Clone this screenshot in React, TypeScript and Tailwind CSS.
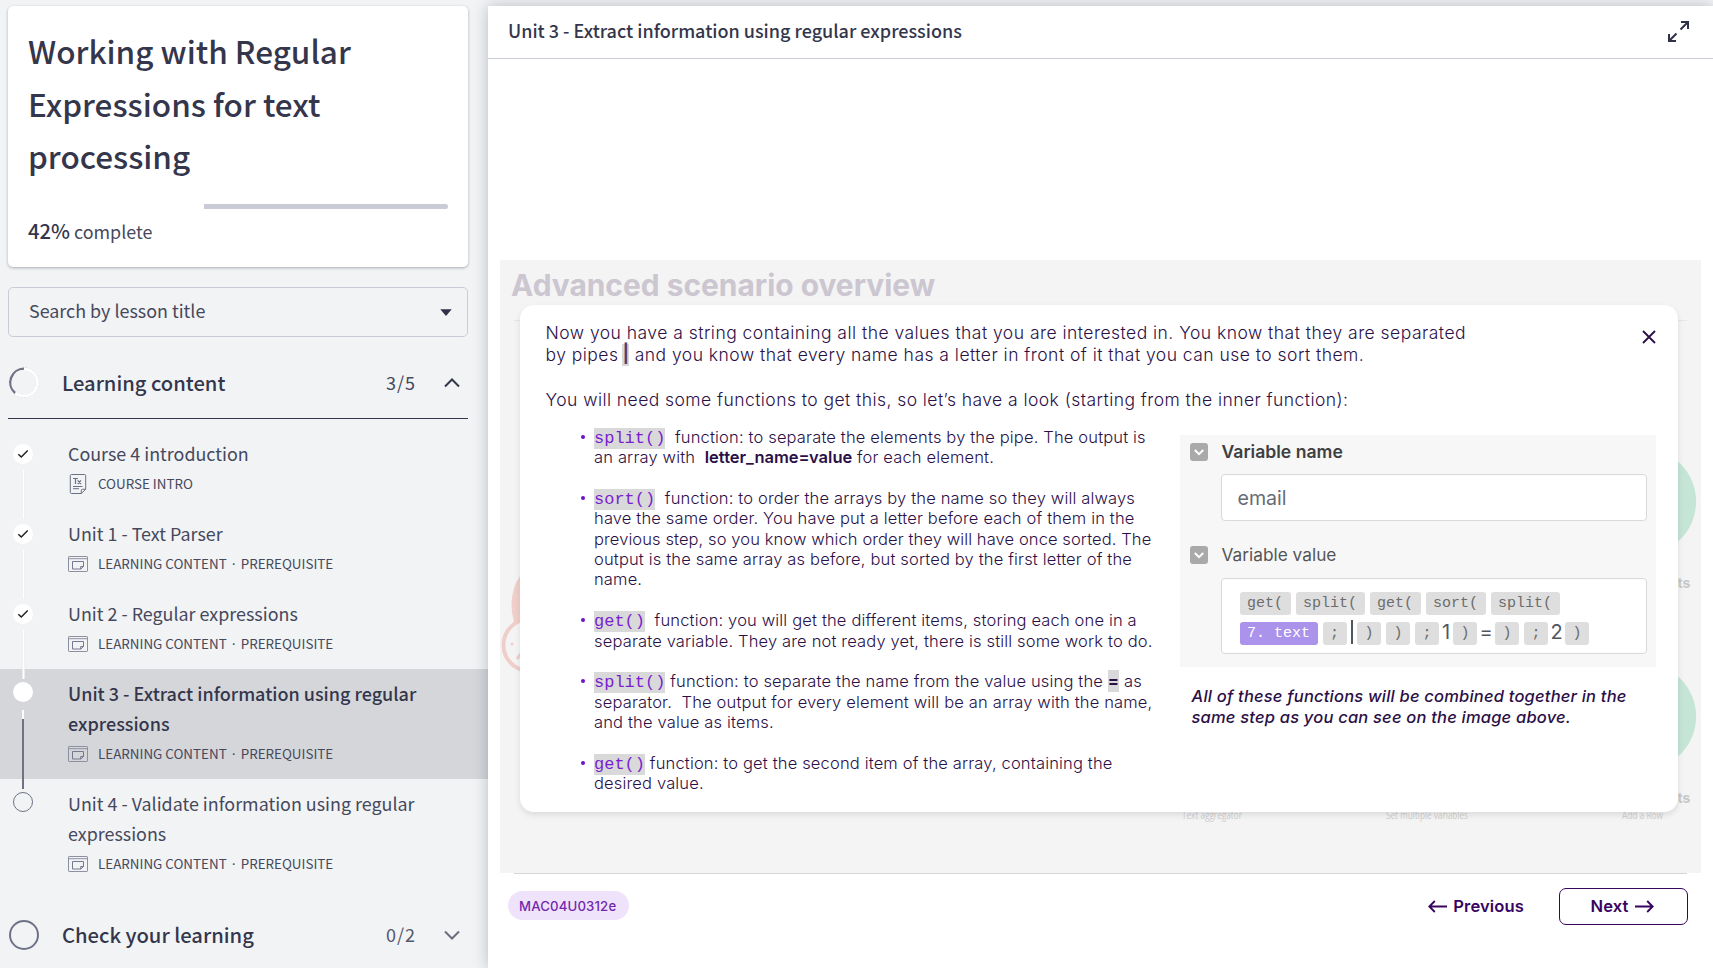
import type { ReactNode } from "react";

const sans = "font-['Noto_Sans_CJK_SC',sans-serif]";
const inter = "font-['Inter',sans-serif]";
const mono = "font-['Liberation_Mono',monospace]";

type Status = "done" | "current" | "todo";

type Lesson = {
  title: string;
  tags: string[];
  icon: "text" | "slides";
  status: Status;
};

const lessons: Lesson[] = [
  { title: "Course 4 introduction", tags: ["COURSE INTRO"], icon: "text", status: "done" },
  { title: "Unit 1 - Text Parser", tags: ["LEARNING CONTENT", "PREREQUISITE"], icon: "slides", status: "done" },
  { title: "Unit 2 - Regular expressions", tags: ["LEARNING CONTENT", "PREREQUISITE"], icon: "slides", status: "done" },
  {
    title: "Unit 3 - Extract information using regular expressions",
    tags: ["LEARNING CONTENT", "PREREQUISITE"],
    icon: "slides",
    status: "current",
  },
  {
    title: "Unit 4 - Validate information using regular expressions",
    tags: ["LEARNING CONTENT", "PREREQUISITE"],
    icon: "slides",
    status: "todo",
  },
];

function TextIcon() {
  return (
    <svg width="20" height="20" viewBox="0 0 20 20" fill="none" stroke="#6d7085" strokeWidth="1">
      <path d="M3.5 .5h13a1.2 1.2 0 0 1 1.2 1.2v13.6l-4.4 4.2H3.5a1.2 1.2 0 0 1-1.2-1.2V1.700a1.2 1.2 0 0 1 1.2-1.2Z" />
      <path d="M13.300 19.500v-3.200a1 1 0 0 1 1-1h3.400" />
      <path d="M5 12.500h9.500M5 14.700h6" />
      <path d="M5 4.500h5M7.500 4.500v5.500M9.700 6.300l3.300 3.700M13 6.300l-3.300 3.700" strokeWidth="1.200" />
    </svg>
  );
}

function SlidesIcon() {
  return (
    <svg width="20" height="16" viewBox="0 0 20 16" fill="none" stroke="#8e90a2" strokeWidth="1">
      <rect x=".5" y=".5" width="19" height="15" rx=".6" />
      <path d="M.5 2.700h19" />
      <path d="M4.500 5.500h11v5l-2.700 2.500H4.500Z" stroke="#76788d" />
      <path d="M12.700 13v-2.500h2.800" stroke="#76788d" />
    </svg>
  );
}

function Marker({ status }: { status: Status }) {
  if (status === "todo") {
    return <div className="h-5 w-5 shrink-0 rounded-full border border-[#6f7286]" />;
  }
  return (
    <div className="flex h-5 w-5 shrink-0 items-center justify-center rounded-full bg-white">
      {status === "done" && (
        <svg width="12" height="10" viewBox="0 0 12 10" fill="none" stroke="#222" strokeWidth="1.500">
          <path d="M1.300 5.200 4.300 8 10.700 1.500" />
        </svg>
      )}
    </div>
  );
}

function LessonRow({ lesson }: { lesson: Lesson }) {
  const { title, tags, icon, status } = lesson;
  return (
    <li className={`flex ${status === "current" ? "h-[110px] bg-[#d5d6da]" : status === "todo" ? "h-[110px]" : "h-20"}`}>
      <div className={`relative z-10 ml-[13px] flex w-5 shrink-0 flex-col items-center ${status === "done" ? "pt-[15px]" : "pt-[13px]"}`}>
        <Marker status={status} />
        {status === "done" && <div className="mt-[6px] -mb-4 h-[49px] w-[2px] shrink-0 translate-x-[0.5px] bg-white shadow-[0_0_1px_#d5d6da]" />}
        {status === "current" && (
          <>
            <div className="mt-[8px] h-[9px] w-[2px] shrink-0 bg-white" />
            <div className="h-[70px] w-[2px] shrink-0 bg-[#6f7286]" />
          </>
        )}
      </div>
      <div className="ml-[35px] w-[370px] pt-[9px]">
        <div
          className={`leading-[30px] ${
            status === "current" ? "text-[18px] font-medium text-[#34364c]" : "text-[17.900px] text-[#46485c]"
          }`}
        >
          {title}
        </div>
        <div className="mt-[2px] flex h-7 items-center text-[13.400px] leading-7 text-[#46485c]">
          <span className="flex w-[30px] shrink-0">{icon === "text" ? <TextIcon /> : <SlidesIcon />}</span>
          {tags.map((tag, i) => (
            <span key={tag} className="-mt-[2px] flex">
              {i > 0 && <span className="mt-px w-[14px] text-center font-['Inter',sans-serif]">·</span>}
              {tag}
            </span>
          ))}
        </div>
      </div>
    </li>
  );
}

function Chevron({ up }: { up?: boolean }) {
  return (
    <svg width="16" height="10" viewBox="0 0 16 10" fill="none" stroke={up ? "#34364c" : "#6a6c80"} strokeWidth="2">
      <path d={up ? "M1 8.500 8 1.500 15 8.500" : "M1 1.500 8 8.500 15 1.500"} />
    </svg>
  );
}

function Sidebar() {
  return (
    <aside className={`${sans} flex w-[488px] shrink-0 flex-col`}>
      <section className="mx-2 mt-[6px] h-[261px] w-[460px] rounded-[5px] bg-white pt-[18px] pr-5 pl-5 shadow-[0_1px_3px_rgba(40,42,60,0.35)]">
        <h1 className="w-[380px] text-[31.500px] leading-[52.600px] font-medium text-[#34364c]">
          Working with Regular Expressions for text processing
        </h1>
        <div className="mt-[22px] flex h-[5px] justify-end">
          <div className="h-[5px] w-[244px] rounded-r-[3px] bg-[#c9cbd7]" />
        </div>
        <p className="mt-[7px] text-[17.900px] leading-[30px] text-[#46485c]">
          <span className="text-[20.200px] font-medium text-[#34364c]">42%</span> complete
        </p>
      </section>

      <div className="mx-2 mt-5 flex h-[50px] w-[460px] items-center justify-between rounded-[5px] border border-[#c9cbd7] pr-[15px] pb-[4px] pl-5 text-[17.900px] text-[#46485c]">
        Search by lesson title
        <svg width="12" height="7" viewBox="0 0 12 7" className="mt-1" fill="#2f3148">
          <path d="M.3.300h11.400L6 7Z" />
        </svg>
      </div>

      <div className="mx-2 mt-[31px] flex h-[51px] w-[460px] items-start border-b border-[#34364c]">
        <div className="flex h-[30px] w-full items-center">
          <svg width="32" height="32" viewBox="0 0 32 32" fill="none" className="shrink-0">
            <circle cx="16" cy="15.500" r="14.700" stroke="#c9cbd7" strokeWidth=".8" strokeDasharray="2 1.500" />
            <circle cx="16" cy="15.500" r="13.700" stroke="#fff" strokeWidth="2.200" />
            <path d="M16 1.700A13.800 13.800 0 0 0 7.100 26" stroke="#6f7286" strokeWidth="2.300" />
          </svg>
          <span className="ml-[22px] flex-1 text-[20.150px] leading-[30px] font-medium text-[#34364c]">Learning content</span>
          <span className="-mt-px mr-[28px] text-[18px] tracking-[1px] text-[#46485c]">3/5</span>
          <span className="mr-[8px]">
            <Chevron up />
          </span>
        </div>
      </div>

      <ul className="mt-[10px]">
        {lessons.map((l) => (
          <LessonRow key={l.title} lesson={l} />
        ))}
      </ul>

      <div className="mx-2 mt-[31px] flex h-[30px] w-[460px] items-center">
        <div className="mr-[23px] ml-px h-[30px] w-[30px] shrink-0 rounded-full border-[2.500px] border-[#6f7286]" />
        <span className="flex-1 text-[20.200px] leading-[30px] font-medium text-[#34364c]">Check your learning</span>
        <span className="-mt-px mr-[28px] text-[18px] tracking-[1px] text-[#55576b]">0/2</span>
        <span className="mr-[8px]">
          <Chevron />
        </span>
      </div>
    </aside>
  );
}

function Code({ children }: { children: ReactNode }) {
  return <code className={`${mono} bg-[#d9d9d9] py-[1px] text-[17px] leading-[0] tracking-normal text-[#7a1fd0]`}>{children}</code>;
}

function Bullet({ children }: { children: ReactNode }) {
  return (
    <li className="mb-[20.370px] flex">
      <span className="mt-[8px] mr-[9px] h-1 w-1 shrink-0 rounded-full bg-[#6a12c8]" />
      <div className="whitespace-pre">{children}</div>
    </li>
  );
}

function Toggle() {
  return (
    <div className="flex h-[18px] w-[18px] shrink-0 items-center justify-center rounded-[3px] bg-[#a9a9a9]">
      <svg width="10" height="7" viewBox="0 0 10 7" fill="none" stroke="#fff" strokeWidth="2">
        <path d="M.8 1 5 5.200 9.200 1" />
      </svg>
    </div>
  );
}

function Chip({ children }: { children: ReactNode }) {
  return (
    <span className={`${mono} flex h-[23px] min-w-[24px] items-center justify-center rounded-[3px] bg-[#dedede] px-[7.500px] text-[15px] leading-none text-[#6c6c6c]`}>
      {children}
    </span>
  );
}

function VariablePanel() {
  return (
    <div className="h-[232px] w-[476px] bg-[#f7f7f7] pt-2 pl-[10px] text-[#555]">
      <div className="flex h-[18px] items-center gap-[14px] text-[17.600px] font-semibold text-[#3f3f3f]">
        <Toggle />
        Variable name
      </div>
      <div className="mt-[13px] ml-[31px] flex h-[47px] w-[426px] items-center rounded border border-[#d9d9d9] bg-white pt-[2px] pl-4 text-[19.600px] text-[#666c74]">
        email
      </div>
      <div className="mt-[25px] flex h-[18px] items-center gap-[14px] text-[17.300px]">
        <Toggle />
        Variable value
      </div>
      <div className="mt-[14px] ml-[31px] h-[76px] w-[426px] rounded border border-[#d9d9d9] bg-white pt-[13px] pl-[18px]">
        <div className="flex gap-[5px]">
          <Chip>get(</Chip>
          <Chip>split(</Chip>
          <Chip>get(</Chip>
          <Chip>sort(</Chip>
          <Chip>split(</Chip>
        </div>
        <div className="mt-[7px] flex items-center text-[20px] leading-[23px] text-[#50565e]">
          <span className={`${mono} mr-[5px] flex h-[23px] w-[78px] items-center justify-center rounded-[3px] bg-[#ab92ea] text-[15px] whitespace-pre text-white`}>
            7. text
          </span>
          <Chip>;</Chip>
          <span className="mr-[4.500px] ml-[4.500px] -mt-[4px] h-6 w-[1.500px] bg-[#50565e]" />
          <div className="flex gap-[5px]">
            <Chip>)</Chip>
            <Chip>)</Chip>
            <Chip>;</Chip>
          </div>
          <span className="-mt-[3px] w-[14px] text-center">1</span>
          <Chip>)</Chip>
          <span className="-mt-[2px] w-[18px] text-center">=</span>
          <div className="flex gap-[5px]">
            <Chip>)</Chip>
            <Chip>;</Chip>
          </div>
          <span className="-mt-[3px] w-[17px] text-center">2</span>
          <Chip>)</Chip>
        </div>
      </div>
    </div>
  );
}

function ScenarioBackdrop() {
  return (
    <svg className="absolute inset-0" width="1201" height="613" viewBox="500 260 1201 613" fill="none">
      <path d="M514 320.500h1173" stroke="#e6e6e6" />
      <ellipse cx="542" cy="605" rx="30.500" ry="42" fill="#f0cfca" />
      <circle cx="529.500" cy="645" r="26" fill="#f4f4f4" stroke="#f0cfca" strokeWidth="4" />
      <circle cx="512" cy="644" r="1.500" fill="#f0cfca" />
      <path d="M517 659 524 650" stroke="#f0cfca" strokeWidth="3" />
      <circle cx="1642.600" cy="501.500" r="53.500" fill="#c5e5d7" />
      <circle cx="1642.600" cy="716.500" r="53.500" fill="#c5e5d7" />
      <g className={inter} fill="#c8c8c8" fontSize="14" fontWeight="700">
        <text x="1677.500" y="588">ts</text>
        <text x="1677.500" y="803">ts</text>
      </g>
      <g className="font-['Open_Sans',sans-serif]" fill="#cecece" fontSize="10">
        <text x="1182" y="819" textLength="60" lengthAdjust="spacingAndGlyphs">Text aggregator</text>
        <text x="1386" y="819" textLength="82" lengthAdjust="spacingAndGlyphs">Set multiple variables</text>
        <text x="1622" y="819" textLength="41" lengthAdjust="spacingAndGlyphs">Add a Row</text>
      </g>
    </svg>
  );
}

function Slide() {
  return (
    <div className={`${inter} relative mt-[201px] ml-3 h-[613px] w-[1201px] bg-[#f4f4f4] pl-5`}>
      <ScenarioBackdrop />
      <h2 className="relative -ml-[9px] h-[45px] pt-[7px] text-[29.900px] leading-[36px] font-bold text-[#cbc6d0]">Advanced scenario overview</h2>
      <div className="relative h-[507px] w-[1158px] rounded-[14px] bg-white pt-[17px] pl-[25.500px] text-[#2b0f47] shadow-[0_3px_6px_rgba(0,0,0,0.1)]">
        <svg className="absolute top-[25px] right-[22px]" width="14" height="14" viewBox="0 0 14 14" stroke="#2b0f47" strokeWidth="1.800">
          <path d="M1 1 13 13M13 1 1 13" />
        </svg>
        <div className="text-[17.500px] leading-[22.300px] font-light tracking-[0.470px] whitespace-pre">
          <p>Now you have a string containing all the values that you are interested in. You know that they are separated</p>
          <p>
            by pipes{" "}
            <span className="-ml-[1.500px] inline-block h-[22px] w-[7px] bg-[#d9d9d9] text-center align-top text-[18px] leading-[20px] font-bold tracking-[0px] text-[#56406f]">|</span>
            {" and you know that every name has a letter in front of it that you can use to sort them."}
          </p>
          <p className="mt-[22.300px] tracking-[0.440px]">You will need some functions to get this, so let’s have a look (starting from the inner function):</p>
        </div>
        <div className="flex">
          <ul className="mt-[15.500px] ml-[35.500px] w-[598.500px] text-[16.500px] leading-[20.400px] font-light tracking-[0.160px]">
            <Bullet>
              <Code>split()</Code>
              {"  function: to separate the elements by the pipe. The output is\nan array with  "}
              <b className="font-semibold tracking-[0px]">letter_name=value</b>
              {" for each element."}
            </Bullet>
            <Bullet>
              <Code>sort()</Code>
              {"  function: to order the arrays by the name so they will always\nhave the same order. You have put a letter before each of them in the\n"}
              <span className="tracking-[0.100px]">previous step, so you know which order they will have once sorted. The</span>
              {"\noutput is the same array as before, but sorted by the first letter of the\nname."}
            </Bullet>
            <Bullet>
              <Code>get()</Code>
              {"  function: you will get the different items, storing each one in a\nseparate variable. They are not ready yet, there is still some work to do."}
            </Bullet>
            <Bullet>
              <Code>split()</Code>
              {" function: to separate the name from the value using the "}
              <b className="bg-[#d9d9d9] py-[1px] font-bold">=</b>
              {" as\nseparator.  The output for every element will be an array with the name,\nand the value as items."}
            </Bullet>
            <Bullet>
              <Code>get()</Code>
              {" function: to get the second item of the array, containing the\ndesired value."}
            </Bullet>
          </ul>
          <div className="mt-6">
            <VariablePanel />
            <p className="mt-[19px] ml-3 text-[16.500px] leading-[21px] font-medium tracking-[0.200px] whitespace-pre italic">
              {"All of these functions will be combined together in the\nsame step as you can see on the image above."}
            </p>
          </div>
        </div>
      </div>
    </div>
  );
}

function Arrow({ left }: { left?: boolean }) {
  return (
    <svg width="19" height="13" viewBox="0 0 19 13" fill="none" stroke="#37045f" strokeWidth="1.800">
      <path d={left ? "M19 6.500H1.500M6.800 1 1.300 6.500l5.500 5.500" : "M0 6.500h17.500M12.200 1l5.500 5.500-5.500 5.500"} />
    </svg>
  );
}

function Footer() {
  return (
    <div className={`${inter} mx-[26px] flex items-start border-t border-[#d6d6d6] pt-[14px] text-[16.600px] font-semibold tracking-[0.100px] text-[#37045f]`}>
      <span className="mt-[3px] -ml-[6px] flex h-[29px] w-[121px] items-center rounded-full bg-[#efe3fb] pt-[2px] pl-[11px] text-[13.200px] font-medium tracking-[0.150px] text-[#7327ae]">
        MAC04U0312e
      </span>
      <button className="mr-[35px] ml-auto flex h-[37px] items-center gap-[6px] pb-px">
        <Arrow left />
        Previous
      </button>
      <button className="-mr-px flex h-[37px] w-[129px] items-center justify-center gap-[6px] rounded-[7px] border-[1.500px] border-[#37045f] pr-[3px] pb-px">
        Next
        <Arrow />
      </button>
    </div>
  );
}

export default function App() {
  return (
    <div className="flex h-[968px] w-[1713px] overflow-hidden bg-[#f1f3f5]">
      <Sidebar />
      <main className="relative z-20 mt-[6px] w-[1225px] shrink-0 bg-white shadow-[0_0_14px_rgba(30,30,50,0.26)]">
        <header className={`${sans} flex h-[53px] items-center justify-between border-b border-[#c9cbd7] pr-6 pl-5 text-[18px] font-medium text-[#34364c]`}>
          <span className="-mt-[3px]">Unit 3 - Extract information using regular expressions</span>
          <svg width="21" height="21" viewBox="0 0 21 21" fill="none" stroke="#2f3148" strokeWidth="2" className="-mt-[2px]">
            <path d="M13 1h7v7M20 1l-7.500 7.500M8 20H1v-7M1 20l7.500-7.500" />
          </svg>
        </header>
        <Slide />
        <Footer />
      </main>
    </div>
  );
}
